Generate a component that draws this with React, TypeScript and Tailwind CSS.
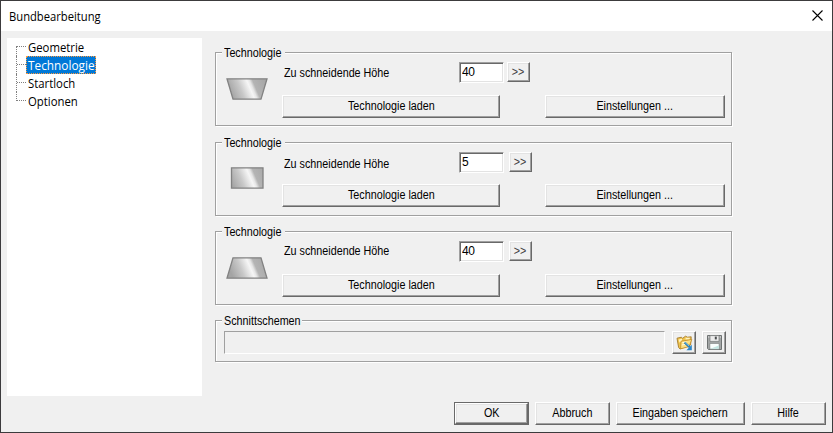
import type { ReactNode } from "react";

type Shape = "wide-top" | "rect" | "wide-bottom";

const raised =
  "flex items-center justify-center bg-[#f0f0f0] border border-t-white border-l-white border-r-[#696969] border-b-[#696969] shadow-[inset_-1px_-1px_0_#a0a0a0,inset_1px_1px_0_#e3e3e3]";

const etched =
  "w-[517px] border border-[#a0a0a0] shadow-[1px_1px_0_#fff,inset_1px_1px_0_#fff]";

function Label({ children, className = "origin-center" }: { children: ReactNode; className?: string }) {
  return (
    <span className={`inline-block scale-x-[0.897] whitespace-nowrap ${className}`}>{children}</span>
  );
}

function Button({ className, children }: { className: string; children: ReactNode }) {
  return (
    <button type="button" className={`${raised} ${className}`}>
      {children}
    </button>
  );
}

function Legend({ text, className }: { text: string; className: string }) {
  return (
    <div className={`-mt-[8px] ml-[6px] h-[15px] overflow-visible bg-[#f0f0f0] pl-[2px] leading-[17px] ${className}`}>
      <Label className="origin-left">{text}</Label>
    </div>
  );
}

const outlines: Record<Shape, string> = {
  "wide-top": "M1 .8H41L35 21.2H7Z",
  rect: "M5.5 .8H37V21.2H5.5Z",
  "wide-bottom": "M7 .8H35L41 21.2H1Z",
};

function Profile({ shape }: { shape: Shape }) {
  const id = `metal-${shape}`;
  return (
    <svg width="42" height="22" viewBox="0 0 42 22" className="shrink-0">
      <defs>
        <linearGradient id={id} gradientUnits="userSpaceOnUse" x1="3" y1="11" x2="36" y2="-3">
          <stop offset="0" stopColor="#a4a4a4" />
          <stop offset="0.3" stopColor="#c8c8c8" />
          <stop offset="0.55" stopColor="#f6f6f6" />
          <stop offset="0.62" stopColor="#e6e6e6" />
          <stop offset="0.7" stopColor="#b4b4b4" />
          <stop offset="1" stopColor="#a8a8a8" />
        </linearGradient>
      </defs>
      <path d={outlines[shape]} fill={`url(#${id})`} stroke="#828282" strokeWidth="1.3" />
    </svg>
  );
}

interface GroupProps {
  shape: Shape;
  value: string;
  iconTop: string;
  rowTop: string;
  labelTop: string;
  arrowGap: string;
  buttonsTop: string;
}

function TechnologyGroup({ shape, value, iconTop, rowTop, labelTop, arrowGap, buttonsTop }: GroupProps) {
  return (
    <section className={`${etched} h-[74px]`}>
      <Legend text="Technologie" className="w-[63px]" />
      <div className="-mt-[7px] flex">
        <div className={`ml-[10px] w-[56px] ${iconTop}`}>
          <Profile shape={shape} />
        </div>
        <div>
          <div className={`flex h-[20px] ${rowTop}`}>
            <div className={`ml-[2px] w-[175px] leading-[15px] ${labelTop}`}>
              <Label className="origin-left">Zu schneidende Höhe</Label>
            </div>
            <input
              readOnly
              value={value}
              className="h-[21px] w-[45px] border border-t-[#a0a0a0] border-l-[#a0a0a0] border-r-white border-b-white bg-white pb-[1px] pl-[2px] tracking-[-0.5px] shadow-[inset_1px_1px_0_#696969,inset_-1px_-1px_0_#e3e3e3] outline-none"
            />
            <Button className={`h-[20px] w-[23px] text-[#404040] ${arrowGap}`}>
              <Label>&gt;&gt;</Label>
            </Button>
          </div>
          <div className={`flex ${buttonsTop}`}>
            <Button className="h-[23px] w-[218px]">
              <Label>Technologie laden</Label>
            </Button>
            <Button className="ml-[45px] h-[23px] w-[180px]">
              <Label>Einstellungen ...</Label>
            </Button>
          </div>
        </div>
      </div>
    </section>
  );
}

function FolderIcon() {
  return (
    <svg width="17" height="16" viewBox="0 0 17 16">
      <path d="M1 3.2 5.5 2.2 6.5 3.4 9.5 1.2 11.5 2.2 15.2 1.8 14.6 10 4 14 2.6 12.4Z" fill="#efc34c" stroke="#a47a2c" strokeWidth=".9" />
      <path d="M2.6 4.4 6 3.8V6.4L3.4 7.4ZM9.6 2.8 13.8 2.8 13.6 4.6H9.6Z" fill="#fff3c0" />
      <path d="M5 6.2 12.8 5 15.8 4.2 13.2 11.6 4.6 13.8Z" fill="#fbe084" stroke="#c08a25" strokeWidth=".8" />
      <path d="M6.4 7.6 10.4 7M5.8 10 9 9.4" stroke="#fffbe2" />
      <path d="M8.6 7.4 13.8 12.2" stroke="#1a6fae" strokeWidth="2.1" />
      <path d="M15.8 9.8V15.2H10.4Z" fill="#2b86c8" />
      <path d="M8.9 7.4 13.2 11.3" stroke="#8cd4f5" strokeWidth=".9" />
    </svg>
  );
}

function DiskIcon() {
  return (
    <svg width="15" height="15" viewBox="0 0 15 15">
      <path d="M.5 .5H14.5V14.5H1.5L.5 13.5Z" fill="#a3a6a6" stroke="#6e7272" />
      <path d="M3 .6H12V6.4H3Z" fill="#ececec" stroke="#777a7a" strokeWidth=".7" />
      <path d="M7.8 1.6H9.8V4.4H7.8Z" fill="#4c4f50" />
      <path d="M2.8 8.4H12.2V14.2H2.8Z" fill="#fafefd" stroke="#7a7e7e" strokeWidth=".7" />
      <path d="M3.4 13.8H11.8V10.4Z" fill="#c3e6e2" />
      <path d="M12.8 1.4H13.8V2.6H12.8ZM1.2 1.4H2.2V2.6H1.2Z" fill="#efefef" />
    </svg>
  );
}

function TreeItem({ text, selected, first, last }: { text: string; selected?: boolean; first?: boolean; last?: boolean }) {
  return (
    <li className="flex h-[18px]">
      <div
        className={`w-px border-l border-dotted border-[#808080] ${
          last ? "h-[9px]" : first ? "mt-[8px] h-[10px]" : "h-[18px]"
        }`}
      />
      <div className="mt-[8px] h-px w-[9px] border-t border-dotted border-[#808080]" />
      <div
        className={`flex h-[18px] items-center pl-[2px] ${
          selected ? "w-[70px] bg-[#0078d7] text-white outline-dotted outline-1 -outline-offset-1 outline-[#ff9a3c]" : ""
        }`}
      >
        <span className={`inline-block origin-left leading-[19px] ${selected ? "scale-x-[0.985]" : "scale-x-[0.945]"}`}>
          {text}
        </span>
      </div>
    </li>
  );
}

export default function App() {
  return (
    <div className="flex h-[433px] w-[833px] flex-col overflow-hidden border border-[#3c3b3d] bg-[#f0f0f0] font-['Liberation_Sans',Arial,sans-serif] text-[12px] leading-[15px] text-black">
      <header className="flex h-[30px] shrink-0 items-center justify-between bg-white pl-[8px] pr-[9px] font-['Open_Sans','Noto_Sans',sans-serif]">
        <h1 className="origin-left scale-x-[0.935]">Bundbearbeitung</h1>
        <svg width="11" height="11" viewBox="0 0 11 11" className="mb-[2px]">
          <path d="M.5 .5 10.5 10.5M10.5 .5 .5 10.5" stroke="#000" strokeWidth="1.1" />
        </svg>
      </header>

      <main className="flex h-[365px] shrink-0">
        <nav className="mt-[7px] ml-[6px] h-[358px] w-[195px] bg-white font-['Open_Sans','Noto_Sans',sans-serif]">
          <ul className="ml-[9px]">
            <TreeItem text="Geometrie" first />
            <TreeItem text="Technologie" selected />
            <TreeItem text="Startloch" />
            <TreeItem text="Optionen" last />
          </ul>
        </nav>

        <div className="ml-[13px] flex flex-col pt-[21px]">
          <TechnologyGroup
            shape="wide-top"
            value="40"
            iconTop="mt-[25px]"
            rowTop="mt-[9px]"
            labelTop="mt-[4px]"
            arrowGap="ml-[3px]"
            buttonsTop="mt-[13px]"
          />
          <div className="mt-[16px]">
            <TechnologyGroup
              shape="rect"
              value="5"
              iconTop="mt-[24px]"
              rowTop="mt-[9px]"
              labelTop="mt-[5px]"
              arrowGap="ml-[5px]"
              buttonsTop="mt-[12px]"
            />
          </div>
          <div className="mt-[15px]">
            <TechnologyGroup
              shape="wide-bottom"
              value="40"
              iconTop="mt-[25px]"
              rowTop="mt-[9px]"
              labelTop="mt-[3px]"
              arrowGap="ml-[5px]"
              buttonsTop="mt-[13px]"
            />
          </div>
          <section className={`${etched} mt-[15px] h-[42px]`}>
            <Legend text="Schnittschemen" className="w-[80px]" />
            <div className="mt-[3px] ml-[8px] flex">
              <div className="h-[23px] w-[441px] border border-t-[#a0a0a0] border-l-[#a0a0a0] border-r-white border-b-white" />
              <Button className="ml-[7px] h-[23px] w-[24px]">
                <FolderIcon />
              </Button>
              <Button className="ml-[6px] h-[23px] w-[24px]">
                <DiskIcon />
              </Button>
            </div>
          </section>
        </div>
      </main>

      <footer className="flex justify-end gap-[6px] pt-[6px] pr-[6px]">
        <div className="h-[23px] w-[75px] border border-[#696969]">
          <Button className="h-full w-full">
            <Label>OK</Label>
          </Button>
        </div>
        <Button className="h-[23px] w-[75px]">
          <Label>Abbruch</Label>
        </Button>
        <Button className="h-[23px] w-[129px]">
          <Label>Eingaben speichern</Label>
        </Button>
        <Button className="h-[23px] w-[75px]">
          <Label>Hilfe</Label>
        </Button>
      </footer>
    </div>
  );
}
